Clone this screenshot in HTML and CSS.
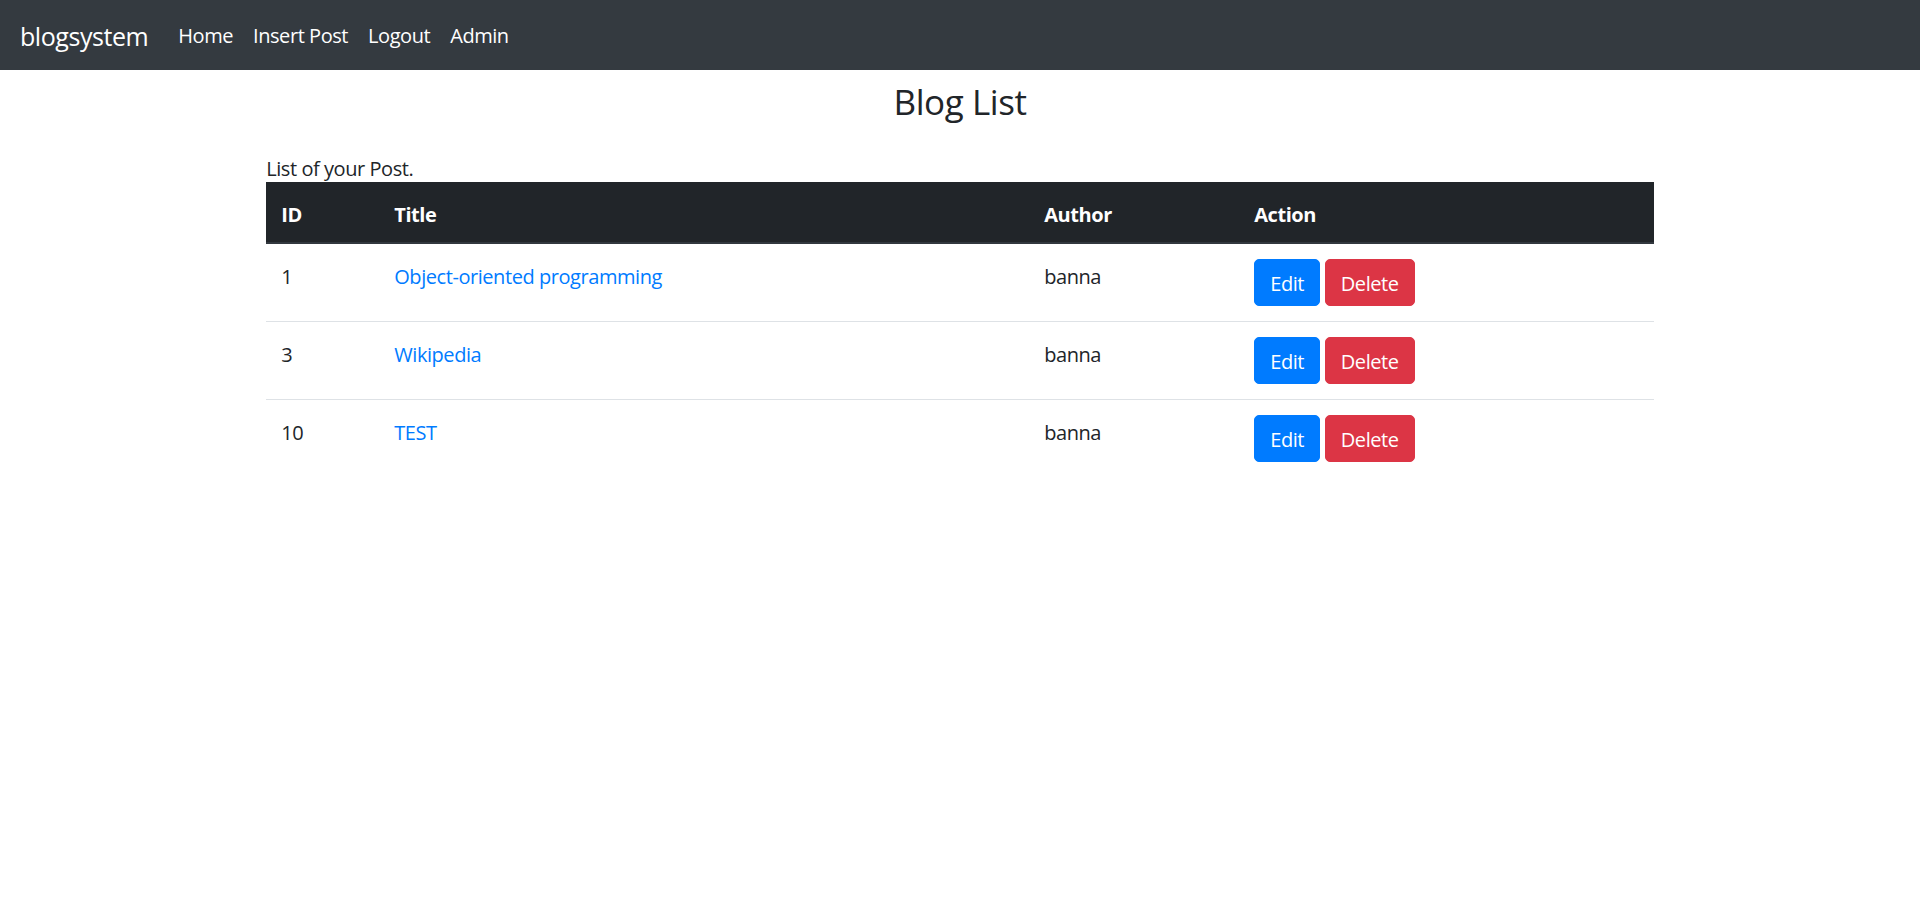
FILE: index.html
```html
<!DOCTYPE html>
<html>
<head>
<meta charset="utf-8">
<title>Blog List</title>
<link rel="stylesheet" href="styles.css">
</head>
<body>
<nav class="navbar">
  <a class="brand" href="#">blogsystem</a>
  <ul class="nav">
    <li><a href="#">Home</a></li>
    <li><a href="#">Insert Post</a></li>
    <li><a href="#">Logout</a></li>
    <li><a href="#">Admin</a></li>
  </ul>
</nav>
<main class="container">
  <h3 class="title">Blog List</h3>
  <div class="caption">List of your Post.</div>
  <table class="table">
    <thead>
      <tr><th class="c-id">ID</th><th class="c-title">Title</th><th class="c-author">Author</th><th class="c-action">Action</th></tr>
    </thead>
    <tbody>
      <tr><td>1</td><td><a href="#">Object-oriented programming</a></td><td>banna</td><td class="actions"><a class="btn btn-primary" href="#">Edit</a> <a class="btn btn-danger" href="#">Delete</a></td></tr>
      <tr><td>3</td><td><a href="#">Wikipedia</a></td><td>banna</td><td class="actions"><a class="btn btn-primary" href="#">Edit</a> <a class="btn btn-danger" href="#">Delete</a></td></tr>
      <tr><td>10</td><td><a href="#">TEST</a></td><td>banna</td><td class="actions"><a class="btn btn-primary" href="#">Edit</a> <a class="btn btn-danger" href="#">Delete</a></td></tr>
    </tbody>
  </table>
</main>
</body>
</html>
```
FILE: styles.css
```css
* { box-sizing: border-box; }
html, body { margin: 0; padding: 0; }
body {
  font-family: "Open Sans", "Noto Sans", sans-serif;
  font-size: 20px;
  line-height: 30px;
  letter-spacing: -0.022em;
  color: #212529;
  background: #fff;
}
a { text-decoration: none; color: #007bff; }

.navbar {
  display: flex;
  align-items: center;
  height: 70px;
  padding: 11px 20px 9px;
  background: #343a40;
}
.brand {
  color: #fff;
  font-size: 25px;
  line-height: 37px;
  margin-right: 20px;
}
.nav { display: flex; list-style: none; margin: 0; padding: 0; }
.nav a { display: block; color: #fff; padding: 10px 10px; font-size: 20px; line-height: 30px; }

.container {
  width: 1425px;
  margin: 0 auto;
  padding: 0 18.75px;
}
.title {
  margin: 11px 0 9px;
  text-align: center;
  font-weight: 400;
  font-size: 35px;
  line-height: 42px;
}
.caption {
  padding-top: 22.5px;
  color: #212529;
  line-height: 27.5px;
}
.table {
  width: 100%;
  border-collapse: collapse;
}
.table th, .table td {
  text-align: left;
  vertical-align: top;
  padding: 17.5px 15px 12.5px;
  border-top: 1.25px solid #dee2e6;
}
.table td.actions { padding: 15px; }
.table thead th {
  background: #212529;
  color: #fff;
  font-weight: 700;
  border-top: 0;
  border-bottom: 2.5px solid #32383e;
}
.table tbody tr:first-child td { border-top: 0; }
.c-id { width: 113px; }
.c-title { width: 650px; }
.c-author { width: 210px; }

.btn {
  display: inline-block;
  color: #fff;
  padding: 8.5px 15px 6.5px;
  line-height: 30px;
  border: 1.25px solid transparent;
  border-radius: 5px;
}
.btn-primary { background: #007bff; border-color: #007bff; }
.btn-danger { background: #dc3545; border-color: #dc3545; }
```
